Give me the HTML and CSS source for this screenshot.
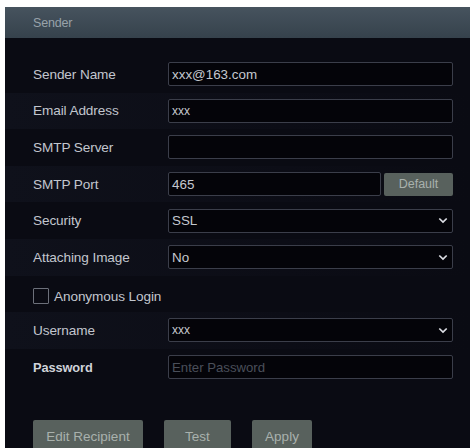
FILE: index.html
```html
<!DOCTYPE html>
<html>
<head>
<meta charset="utf-8">
<link rel="stylesheet" href="styles.css">
</head>
<body>
<div class="panel">
  <div class="header">Sender</div>
  <div class="form">
    <div class="row">
      <div class="label">Sender Name</div>
      <div class="field"><span class="val">xxx@163.com</span></div>
    </div>
    <div class="row alt">
      <div class="label">Email Address</div>
      <div class="field"><span class="val small">xxx</span></div>
    </div>
    <div class="row">
      <div class="label">SMTP Server</div>
      <div class="field"></div>
    </div>
    <div class="row alt">
      <div class="label">SMTP Port</div>
      <div class="field port"><span class="val">465</span></div>
      <div class="btn default">Default</div>
    </div>
    <div class="row">
      <div class="label">Security</div>
      <div class="field select"><span class="val">SSL</span><svg class="chev" viewBox="0 0 10 7" width="10" height="7"><path d="M1.3 1.5 L5 5 L8.7 1.5" fill="none" stroke="#dcdee4" stroke-width="1.7"/></svg></div>
    </div>
    <div class="row alt">
      <div class="label">Attaching Image</div>
      <div class="field select"><span class="val">No</span><svg class="chev" viewBox="0 0 10 7" width="10" height="7"><path d="M1.3 1.5 L5 5 L8.7 1.5" fill="none" stroke="#dcdee4" stroke-width="1.7"/></svg></div>
    </div>
    <div class="row">
      <div class="check"><span class="box"></span><span class="checklabel">Anonymous Login</span></div>
    </div>
    <div class="row alt">
      <div class="label">Username</div>
      <div class="field select"><span class="val small">xxx</span><svg class="chev" viewBox="0 0 10 7" width="10" height="7"><path d="M1.3 1.5 L5 5 L8.7 1.5" fill="none" stroke="#dcdee4" stroke-width="1.7"/></svg></div>
    </div>
    <div class="row">
      <div class="label bold">Password</div>
      <div class="field"><span class="ph">Enter Password</span></div>
    </div>
  </div>
  <div class="actions">
    <div class="btn edit">Edit Recipient</div>
    <div class="btn test">Test</div>
    <div class="btn apply">Apply</div>
  </div>
</div>
</body>
</html>
```
FILE: styles.css
```css
html, body {
  margin: 0;
  padding: 0;
  background: #ffffff;
}
body {
  padding: 7px 4px 0 5px;
  height: 448px;
  box-sizing: border-box;
  overflow: hidden;
  font-family: "Liberation Sans", Arial, sans-serif;
}
.panel {
  background: #0a0b13;
  height: 441px;
  display: flex;
  flex-direction: column;
}
.header {
  height: 31px;
  background: linear-gradient(#46535e, #36424c);
  color: #98a2aa;
  font-size: 12.5px;
  line-height: 33px;
  padding-left: 28px;
  letter-spacing: -0.2px;
}
.form {
  padding-top: 18px;
  display: flex;
  flex-direction: column;
}
.row {
  height: 36.6px;
  display: flex;
  align-items: center;
  padding-left: 28px;
  padding-right: 17px;
}
.row.alt {
  background: linear-gradient(90deg, #0f111b, #0c0d16 60%, #0a0b13);
}
.label {
  width: 135px;
  color: #c2c6ce;
  font-size: 13.6px;
  letter-spacing: -0.1px;
}
.label.bold {
  font-weight: bold;
  font-size: 12.8px;
  color: #d0d3da;
}
.field {
  flex: 1;
  height: 24px;
  box-sizing: border-box;
  border: 1px solid #3b3e4a;
  border-radius: 2px;
  background: #040409;
  display: flex;
  align-items: center;
  padding-left: 3px;
  padding-right: 4px;
}
.field.port {
  flex: none;
  width: 213px;
}
.val {
  color: #c4c8cf;
  font-size: 13.4px;
}
.val.small {
  font-size: 12px;
}
.ph {
  color: #4a4f5a;
  font-size: 13.2px;
}
.select {
  justify-content: space-between;
}
.chev {
  display: block;
}
.btn {
  background: #58615d;
  color: #a9b1ad;
  font-size: 12px;
  display: flex;
  align-items: center;
  justify-content: center;
  border-radius: 2px;
}
.default {
  margin-left: 3px;
  flex: 1;
  height: 23px;
  font-size: 12.5px;
}
.check {
  display: flex;
  align-items: center;
  padding-top: 5px;
}
.box {
  width: 16px;
  height: 16px;
  box-sizing: border-box;
  border: 1px solid #6c707a;
  border-radius: 1px;
  margin-right: 5px;
}
.checklabel {
  color: #c2c6ce;
  font-size: 13.6px;
  letter-spacing: -0.1px;
}
.actions {
  margin-top: 35px;
  padding-left: 28px;
  display: flex;
  gap: 21px;
}
.actions .btn {
  height: 32px;
  font-size: 13.5px;
}
.edit { width: 110px; }
.test { width: 67px; }
.apply { width: 60px; }
```
